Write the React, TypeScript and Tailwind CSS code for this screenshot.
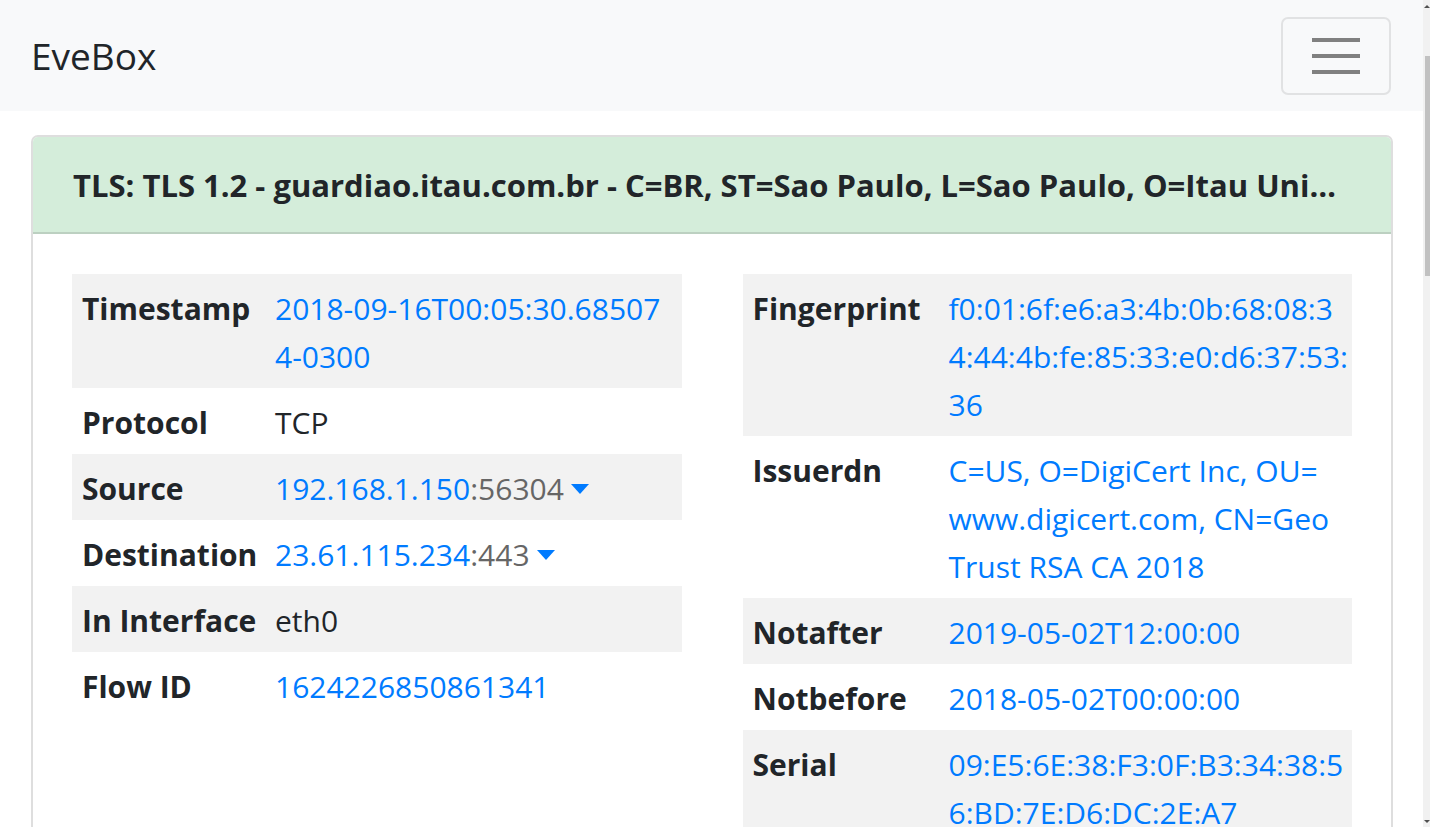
import React from 'react';

type Row = {
  label: string;
  lines?: string[];
  plain?: string;
  host?: string;
  port?: string;
};

const leftRows: Row[] = [
  { label: 'Timestamp', lines: ['2018-09-16T00:05:30.68507', '4-0300'] },
  { label: 'Protocol', plain: 'TCP' },
  { label: 'Source', host: '192.168.1.150', port: '56304' },
  { label: 'Destination', host: '23.61.115.234', port: '443' },
  { label: 'In Interface', plain: 'eth0' },
  { label: 'Flow ID', lines: ['1624226850861341'] },
];

const rightRows: Row[] = [
  { label: 'Fingerprint', lines: ['f0:01:6f:e6:a3:4b:0b:68:08:3', '4:44:4b:fe:85:33:e0:d6:37:53:', '36'] },
  { label: 'Issuerdn', lines: ['C=US, O=DigiCert Inc, OU=', 'www.digicert.com, CN=Geo', 'Trust RSA CA 2018'] },
  { label: 'Notafter', lines: ['2019-05-02T12:00:00'] },
  { label: 'Notbefore', lines: ['2018-05-02T00:00:00'] },
  { label: 'Serial', lines: ['09:E5:6E:38:F3:0F:B3:34:38:5', '6:BD:7E:D6:DC:2E:A7'] },
];

function Caret() {
  return (
    <span className="inline-block ml-[7px] align-middle mb-[6px] w-0 h-0 border-t-[10px] border-t-[#007bff] border-x-[9px] border-x-transparent" />
  );
}

function Value({ row }: { row: Row }) {
  if (row.plain) return <div className="text-[#212529]">{row.plain}</div>;
  if (row.host) {
    return (
      <div className="whitespace-nowrap">
        <a className="text-[#007bff]">{row.host}</a>
        <span className="text-[#666]">:{row.port}</span>
        <Caret />
      </div>
    );
  }
  return (
    <div className="text-[#007bff]">
      {row.lines!.map((l, i) => (
        <div key={i} className="whitespace-nowrap">{l}</div>
      ))}
    </div>
  );
}

function InfoTable({ rows, labelWidth }: { rows: Row[]; labelWidth: string }) {
  return (
    <div className="flex flex-col">
      {rows.map((r, i) => (
        <div key={r.label} className={`flex pt-[11px] pb-[7px] ${i % 2 === 0 ? 'bg-[#f2f2f2]' : 'bg-white'}`}>
          <div className={`${labelWidth} shrink-0 pl-[10px] font-bold text-[#212529] whitespace-nowrap`}>{r.label}</div>
          <div className="pl-[10px] pr-[10px] min-w-0">
            <Value row={r} />
          </div>
        </div>
      ))}
    </div>
  );
}

export default function App() {
  return (
    <div className="h-[827px] w-[1430px] overflow-hidden flex bg-white" style={{ fontFamily: '"Open Sans", "Noto Sans", sans-serif' }}>
      <div className="flex-1 min-w-0 flex flex-col">
        <nav className="h-[111px] shrink-0 bg-[#f8f9fa] flex items-center justify-between pl-[31px] pr-[32px]">
          <span className="text-[37px] text-[#212529] leading-none">EveBox</span>
          <button className="w-[110px] h-[78px] rounded-[7px] border-2 border-[#e1e2e3] flex items-center justify-center">
            <svg width="48" height="36" viewBox="0 0 48 36">
              <path d="M0 2h48M0 18h48M0 34h48" stroke="#808080" strokeWidth="4" />
            </svg>
          </button>
        </nav>

        <div className="pt-[24px] pl-[31px] pr-[30px]">
          <div className="rounded-[7px] border-2 border-[#dedede] overflow-hidden">
            <div className="bg-[#d4edda] border-b-2 border-[#bcd0c1] h-[97px] flex items-center pl-[40px] pr-[42px]">
              <h5 className="text-[31px] font-bold text-[#212529] truncate leading-[42px]">
                TLS: TLS 1.2 - guardiao.itau.com.br - C=BR, ST=Sao Paulo, L=Sao Paulo, O=Itau Unibanco S.A., CN=guardiao.itau.com.br
              </h5>
            </div>
            <div className="pt-[40px] px-[39px] pb-[39px] grid grid-cols-2 gap-[61px] text-[30px] leading-[48px]">
              <InfoTable rows={leftRows} labelWidth="w-[193px]" />
              <InfoTable rows={rightRows} labelWidth="w-[196px]" />
            </div>
          </div>
        </div>
      </div>

      <div className="w-[7px] shrink-0 bg-[#f1f1f1] flex flex-col items-end">
        <div className="h-[12px] w-full flex items-center justify-center">
          <span className="w-0 h-0 border-b-[3px] border-b-[#505050] border-x-[3px] border-x-transparent" />
        </div>
        <div className="mt-[44px] h-[220px] w-[5px] bg-[#c1c1c1]" />
        <div className="flex-1" />
        <div className="h-[12px] w-full flex items-center justify-center">
          <span className="w-0 h-0 border-t-[3px] border-t-[#505050] border-x-[3px] border-x-transparent" />
        </div>
      </div>
    </div>
  );
}
